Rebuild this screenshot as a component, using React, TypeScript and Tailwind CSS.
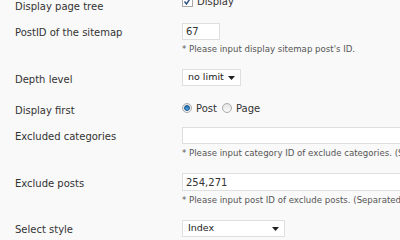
const font = { fontFamily: '"DejaVu Sans", Verdana, sans-serif' };

const Label = ({ text, pt }: { text: string; pt: string }) => (
  <div className={`w-[182px] shrink-0 pl-[15px] text-[10px] leading-[13px] text-[#333] ${pt}`}>{text}</div>
);

const Hint = ({ text }: { text: string }) => (
  <div className="mt-[3px] whitespace-nowrap text-[8.6px] leading-[12px] text-[#555]">{text}</div>
);

const Arrow = () => (
  <svg width="7" height="4" viewBox="0 0 7 4" className="shrink-0">
    <path d="M0 0h7L3.5 4z" fill="#222" />
  </svg>
);

const Radio = ({ checked }: { checked?: boolean }) => (
  <span className="inline-flex h-[10px] w-[10px] shrink-0 items-center justify-center rounded-full border border-[#aaa] bg-gradient-to-b from-[#e4e4e4] to-[#fafafa]">
    {checked && <span className="h-[6px] w-[6px] rounded-full border border-[#13548c] bg-gradient-to-b from-[#1b6fb5] to-[#5aa4df]" />}
  </span>
);

export default function App() {
  return (
    <div className="h-[240px] w-[400px] overflow-hidden bg-[#f9f9f9]" style={font}>
      <div className="flex h-[18px]">
        <Label text="Display page tree" pt="pt-0" />
        <div className="-mt-[4px] flex h-[11px] items-center gap-[4px]">
          <span className="flex h-[11px] w-[11px] items-center justify-center border border-[#a8a8a8] bg-white">
            <svg width="9" height="9" viewBox="0 0 9 9">
              <path d="M1.5 4.5l2 2.5L7.5 1" fill="none" stroke="#2c4f84" strokeWidth="1.4" />
            </svg>
          </span>
          <span className="text-[10px] leading-[13px] text-[#333]">Display</span>
        </div>
      </div>

      <div className="flex h-[46px]">
        <Label text="PostID of the sitemap" pt="pt-[8px]" />
        <div className="pt-[5px]">
          <div className="flex h-[17px] w-[38px] items-center border border-[#dfdfdf] bg-white px-[3px] text-[10px] text-[#333]">67</div>
          <Hint text="* Please input display sitemap post's ID." />
        </div>
      </div>

      <div className="flex h-[32px]">
        <Label text="Depth level" pt="pt-[9px]" />
        <div className="pt-[5px]">
          <div className="flex h-[17px] w-[59px] items-center justify-between whitespace-nowrap border border-[#dfdfdf] bg-white pl-[5px] pr-[5px] text-[9.5px] text-[#222]">
            <span>no limit</span>
            <Arrow />
          </div>
        </div>
      </div>

      <div className="flex h-[26px]">
        <Label text="Display first" pt="pt-[8px]" />
        <div className="pt-[7px]">
          <div className="flex h-[10px] items-center text-[10px] leading-[13px] text-[#333]">
            <Radio checked />
            <span className="ml-[4px]">Post</span>
            <span className="ml-[5px] flex"><Radio /></span>
            <span className="ml-[4px]">Page</span>
          </div>
        </div>
      </div>

      <div className="flex h-[46px]">
        <Label text="Excluded categories" pt="pt-[8px]" />
        <div className="pt-[5px]">
          <div className="h-[17px] w-[300px] border border-[#dfdfdf] bg-white" />
          <Hint text="* Please input category ID of exclude categories. (Separated by commas)" />
        </div>
      </div>

      <div className="flex h-[47px]">
        <Label text="Exclude posts" pt="pt-[9px]" />
        <div className="pt-[5px]">
          <div className="flex h-[18px] w-[300px] items-center border border-[#dfdfdf] bg-white px-[3px] text-[10px] text-[#333]">254,271</div>
          <Hint text="* Please input post ID of exclude posts. (Separated by commas)" />
        </div>
      </div>

      <div className="flex h-[25px]">
        <Label text="Select style" pt="pt-[8px]" />
        <div className="pt-[5px]">
          <div className="flex h-[17px] w-[103px] items-center justify-between border border-[#dfdfdf] bg-white pl-[5px] pr-[5px] text-[9.5px] text-[#222]">
            <span>Index</span>
            <Arrow />
          </div>
        </div>
      </div>
    </div>
  );
}
